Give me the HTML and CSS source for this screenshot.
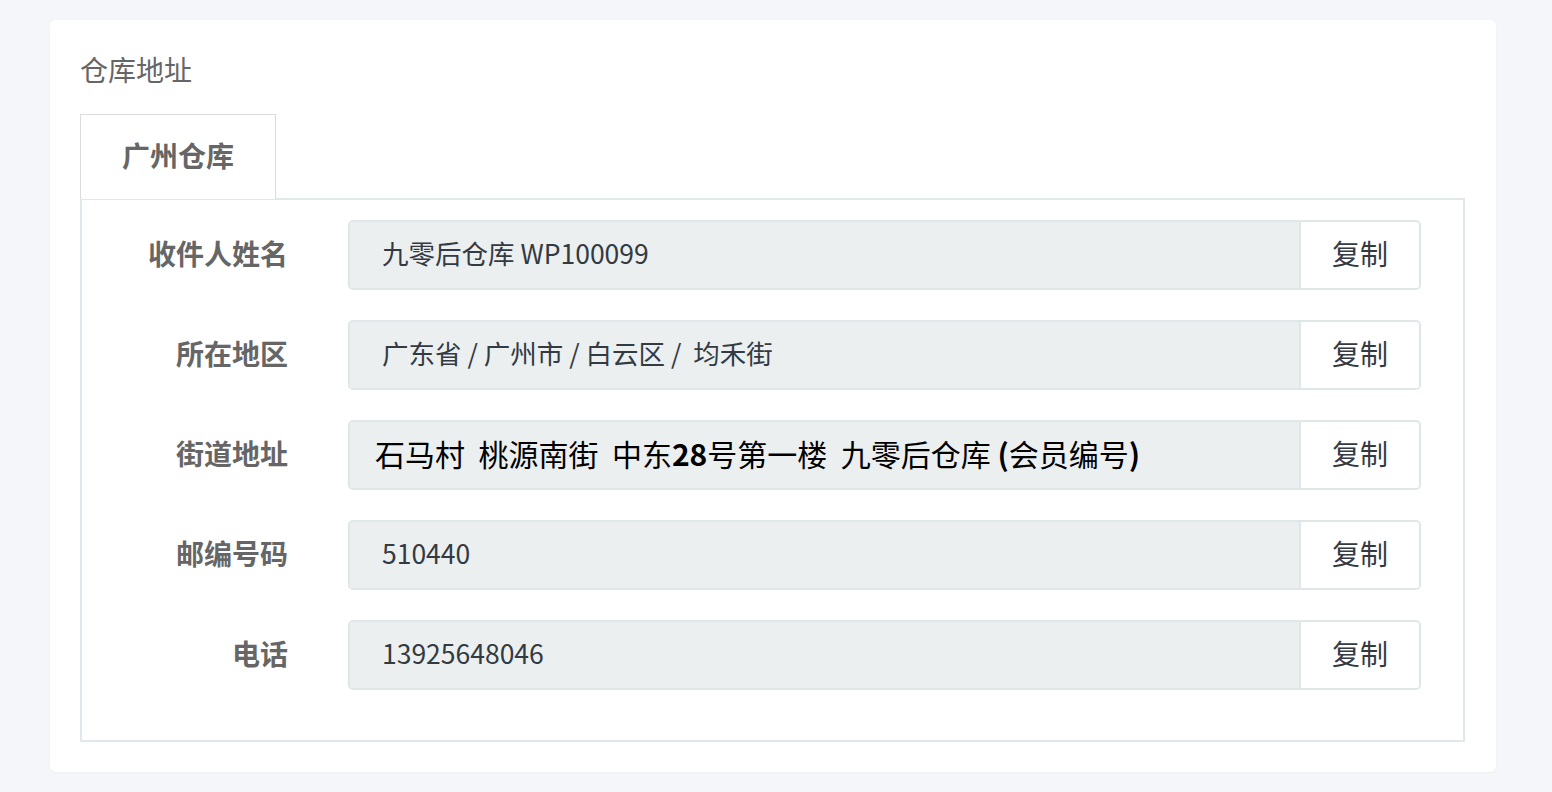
FILE: index.html
```html
<!doctype html>
<html lang="zh-CN">
<head>
    <meta charset="UTF-8">
    <title>仓库地址</title>
    <link rel="stylesheet" href="styles.css">
</head>
<body>
    <div class="card">
        <h3 class="card-title">仓库地址</h3>
        <div class="tabs">
            <div class="tab active">广州仓库</div>
        </div>
        <div class="panel">
            <div class="row">
                <label>收件人姓名</label>
                <div class="group">
                    <div class="value">九零后仓库 WP100099</div>
                    <button class="copy">复制</button>
                </div>
            </div>
            <div class="row">
                <label>所在地区</label>
                <div class="group">
                    <div class="value">广东省 / 广州市 / 白云区 /&nbsp; 均禾街</div>
                    <button class="copy">复制</button>
                </div>
            </div>
            <div class="row">
                <label>街道地址</label>
                <div class="group">
                    <div class="value street">石马村&nbsp; 桃源南街&nbsp; 中东<b>28</b>号第一楼&nbsp; 九零后仓库 <b>(</b>会员编号<b>)</b></div>
                    <button class="copy">复制</button>
                </div>
            </div>
            <div class="row">
                <label>邮编号码</label>
                <div class="group">
                    <div class="value">510440</div>
                    <button class="copy">复制</button>
                </div>
            </div>
            <div class="row">
                <label>电话</label>
                <div class="group">
                    <div class="value">13925648046</div>
                    <button class="copy">复制</button>
                </div>
            </div>
        </div>
    </div>
</body>
</html>
```

FILE: styles.css
```css
* {
    padding: 0;
    margin: 0;
    box-sizing: border-box;
}
body {
    background: #f5f6f9;
    font-family: "Noto Sans CJK SC", "Noto Sans", sans-serif;
    padding: 20px 56px 20px 50px;
}
.card {
    background: #fff;
    border-radius: 6px;
    padding: 28px 31px 30px 30px;
    box-shadow: 0 1px 2px rgba(0,0,0,0.03);
}
.card-title {
    font-size: 28px;
    font-weight: 400;
    color: #666;
    line-height: 42px;
    margin-bottom: 24px;
}
.tabs {
    display: flex;
}
.tab {
    font-size: 28px;
    font-weight: 700;
    color: #666;
    padding: 0 41px;
    height: 85px;
    line-height: 80px;
    border: 1px solid #dcdcdc;
    border-bottom: none;
    background: #fff;
    margin-bottom: -1px;
    position: relative;
}
.panel {
    border: 2px solid #dfe8ea;
    padding: 20px 42px 50px 0;
    display: flex;
    flex-direction: column;
    gap: 30px;
}
.row {
    display: flex;
    align-items: center;
    gap: 60px;
}
.row label {
    width: 206px;
    text-align: right;
    font-size: 28px;
    font-weight: 700;
    color: #666;
    line-height: 64px;
    padding-bottom: 5px;
}
.group {
    flex: 1;
    display: flex;
    height: 70px;
    border: 2px solid #dfe7e9;
    border-radius: 5px;
    overflow: hidden;
}
.value {
    flex: 1;
    background: #ebeff0;
    font-size: 26.5px;
    color: #333a42;
    padding-left: 32px;
    line-height: 62px;
}
.value.street {
    padding-left: 25px;
    font-size: 30px;
    color: #000;
}
.value.street b {
    font-weight: 700;
}
.copy {
    width: 120px;
    border: none;
    border-left: 2px solid #dfe7e9;
    background: #fff;
    font-family: inherit;
    font-size: 28px;
    color: #333a42;
    cursor: pointer;
    padding-bottom: 4px;
}
```
